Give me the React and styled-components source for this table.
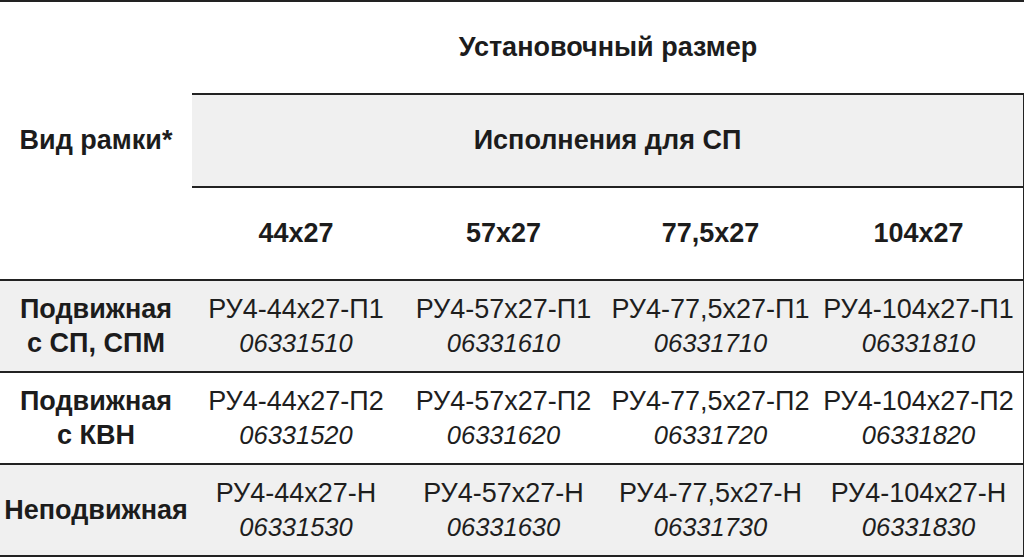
import React from 'react';
import styled, { createGlobalStyle } from 'styled-components';

const GlobalStyle = createGlobalStyle`
  html, body {
    margin: 0;
    padding: 0;
    background: #ffffff;
  }
  body {
    font-family: "Liberation Sans", Arial, sans-serif;
    color: #1c1c1c;
  }
`;

const LINE = '2px solid #222222';
const GRAY = '#f0f0f0';

const Table = styled.table`
  width: 1024px;
  border-collapse: collapse;
  table-layout: fixed;
  border-top: ${LINE};
`;

const Col = styled.col`
  width: ${p => p.$w}px;
`;

const HeadCell = styled.th`
  height: 91px;
  padding: 0;
  font-size: 27px;
  font-weight: bold;
  text-align: center;
  vertical-align: middle;
  white-space: nowrap;
  background: ${p => (p.$gray ? GRAY : 'transparent')};
  border-top: ${p => (p.$lineTop ? LINE : 'none')};
  border-right: ${p => (p.$lineRight ? LINE : 'none')};
`;

const Row = styled.tr`
  background: ${p => (p.$gray ? GRAY : '#ffffff')};
  border-top: ${LINE};
  border-bottom: ${p => (p.$last ? LINE : 'none')};
`;

const NameCell = styled.th`
  height: 90px;
  padding: 0;
  font-size: 27px;
  font-weight: bold;
  line-height: 34px;
  text-align: center;
  vertical-align: middle;
  white-space: nowrap;
`;

const Cell = styled.td`
  padding: 0;
  text-align: center;
  vertical-align: middle;
  white-space: nowrap;
  border-right: ${p => (p.$lineRight ? LINE : 'none')};
`;

const Code = styled.div`
  font-size: 27px;
  line-height: 34px;
  color: #1e1e1e;
`;

const Article = styled.div`
  font-size: 25.5px;
  line-height: 34px;
  font-style: italic;
  color: #1e1e1e;
`;

const sizes = ['44x27', '57x27', '77,5x27', '104x27'];
const series = ['5', '6', '7', '8'];

const rows = [
  { name: ['Подвижная', 'с СП, СПМ'], suffix: 'П1', gray: true },
  { name: ['Подвижная', 'с КВН'], suffix: 'П2', gray: false },
  { name: ['Неподвижная'], suffix: 'Н', gray: true },
];

const artNum = (i, r) => `06331${series[i]}${r + 1}0`;

export default function App() {
  return (
    <>
      <GlobalStyle />
      <Table>
        <colgroup>
          <Col $w={192} />
          <Col $w={208} />
          <Col $w={207} />
          <Col $w={207} />
          <Col $w={210} />
        </colgroup>
        <thead>
          <tr>
            <HeadCell rowSpan={3}>Вид рамки*</HeadCell>
            <HeadCell colSpan={4}>Установочный размер</HeadCell>
          </tr>
          <tr>
            <HeadCell colSpan={4} $gray $lineTop $lineRight>
              Исполнения для СП
            </HeadCell>
          </tr>
          <tr>
            {sizes.map((s, i) => (
              <HeadCell key={s} $lineTop $lineRight={i === sizes.length - 1}>
                {s}
              </HeadCell>
            ))}
          </tr>
        </thead>
        <tbody>
          {rows.map((r, ri) => (
            <Row key={ri} $gray={r.gray} $last={ri === rows.length - 1}>
              <NameCell>
                {r.name.map(n => (
                  <div key={n}>{n}</div>
                ))}
              </NameCell>
              {sizes.map((s, i) => (
                <Cell key={s} $lineRight={i === sizes.length - 1}>
                  <Code>РУ4-{s}-{r.suffix}</Code>
                  <Article>{artNum(i, ri)}</Article>
                </Cell>
              ))}
            </Row>
          ))}
        </tbody>
      </Table>
    </>
  );
}
